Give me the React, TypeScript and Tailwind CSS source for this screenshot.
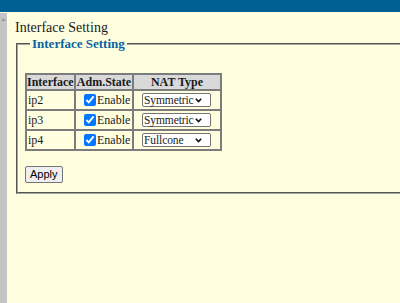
import React from "react";

type Row = { name: string; nat: string };

const rows: Row[] = [
  { name: "ip2", nat: "Symmetric" },
  { name: "ip3", nat: "Symmetric" },
  { name: "ip4", nat: "Fullcone" },
];

const serif = { fontFamily: '"Liberation Serif", "Times New Roman", serif' };
const sans = { fontFamily: '"Liberation Sans", Arial, sans-serif' };

function NatSelect({ value }: { value: string }) {
  return (
    <div className="relative h-[14px] w-[69px] rounded-[2px] border border-[#767676] bg-white">
      <span className="block pl-[1px] text-[11.5px] leading-[12px] tracking-[-0.1px] text-[#222]">{value}</span>
      <svg
        className="absolute right-[8px] top-[4px]"
        width="7"
        height="5"
        viewBox="0 0 7 5"
      >
        <path d="M0.8 0.8 L3.5 3.6 L6.2 0.8" fill="none" stroke="#111" strokeWidth="1.6" />
      </svg>
    </div>
  );
}

export default function App() {
  return (
    <div className="flex h-[303px] w-[400px] flex-col overflow-hidden bg-[#ffffe0]" style={serif}>
      <div className="h-[12px] shrink-0 bg-[#006094]" />
      <div className="flex min-h-0 flex-1 pt-[1px]">
        <div className="relative w-[7px] shrink-0 bg-[#c4c4c4]">
          <svg className="absolute left-[1px] top-[5px]" width="5" height="3" viewBox="0 0 5 3">
            <path d="M0 3 L2.5 0 L5 3 Z" fill="#9a9a9a" />
          </svg>
        </div>
        <div className="min-w-0 flex-1 pt-[7px]">
          <h1 className="ml-[8px] text-[14px] leading-[16px] text-[#1a1a1a]">Interface Setting</h1>
          <fieldset className="ml-[9px] w-[420px] border-2 border-[#a8a8a0] [border-style:groove] pb-[7px] pl-[7px]">
            <legend className="ml-[5px] px-[2px] text-[13px] font-bold leading-[15px] text-[#0b63a0]">
              Interface Setting
            </legend>
            <table className="mt-[22px] border-separate border-spacing-0 border border-[#7c7c7c] text-[12px] text-[#1a1a1a]">
              <thead>
                <tr className="h-[16px] bg-[#d9d9d9]">
                  <th className="w-[49px] border border-[#7c7c7c] p-0 text-left leading-[13px]">Interface</th>
                  <th className="w-[58px] border border-[#7c7c7c] p-0 text-center leading-[13px]">Adm.State</th>
                  <th className="w-[88px] border border-[#7c7c7c] p-0 text-center leading-[13px]">NAT Type</th>
                </tr>
              </thead>
              <tbody>
                {rows.map((r) => (
                  <tr key={r.name} className="h-[20px]">
                    <td className="border border-[#7c7c7c] p-0 pl-[1px] leading-[14px]">{r.name}</td>
                    <td className="border border-[#7c7c7c] p-0">
                      <div className="flex items-center pl-[8px]">
                        <input
                          type="checkbox"
                          checked
                          readOnly
                          className="m-0 mr-[1px] h-[12px] w-[12px]"
                        />
                        <span className="leading-[14px]">Enable</span>
                      </div>
                    </td>
                    <td className="border border-[#7c7c7c] p-0">
                      <div className="flex pl-[8px]">
                        <NatSelect value={r.nat} />
                      </div>
                    </td>
                  </tr>
                ))}
              </tbody>
            </table>
            <button
              className="mt-[15px] h-[17px] rounded-[2px] border border-[#767676] bg-[#efefef] px-[4px] text-[11px] leading-[13px] text-black"
              style={sans}
            >
              Apply
            </button>
          </fieldset>
        </div>
      </div>
    </div>
  );
}
